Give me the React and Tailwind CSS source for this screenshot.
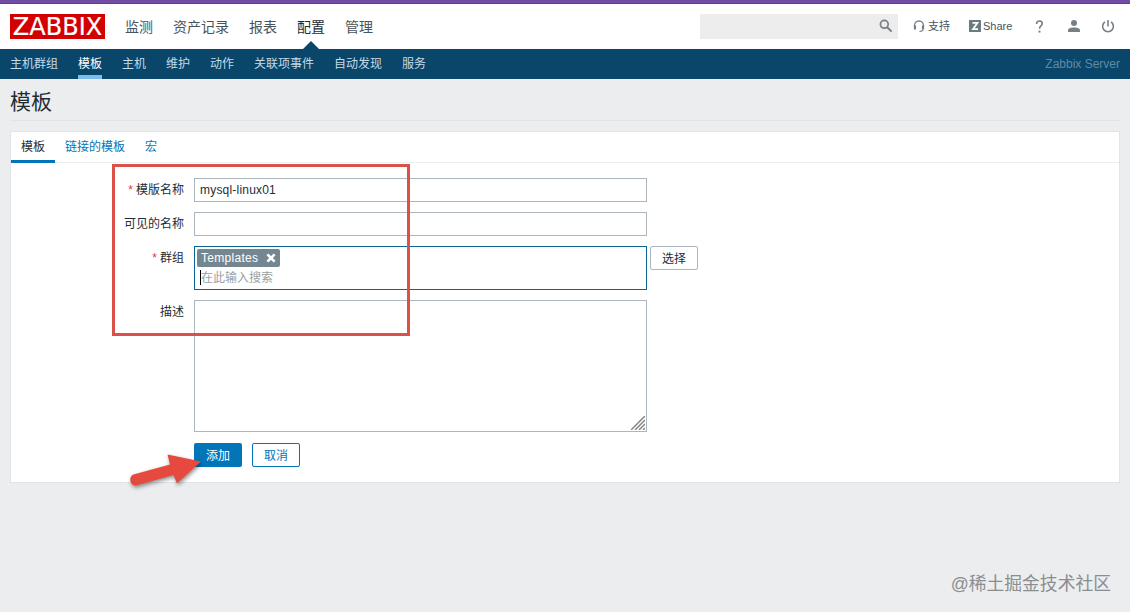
import { useState } from 'react';

const mainMenu = ['监测', '资产记录', '报表', '配置', '管理'];
const subMenu = ['主机群组', '模板', '主机', '维护', '动作', '关联项事件', '自动发现', '服务'];
const tabs = ['模板', '链接的模板', '宏'];

function Header() {
  return (
    <header className="flex h-[45px] bg-white">
      <div className="ml-[10px] mt-[10px] flex h-[25px] w-[95px] items-center justify-center bg-[#d20000] font-['DejaVu_Sans'] text-[24px] leading-[25px] text-white">
        <span className="mt-px [-webkit-text-stroke:0.2px_white]">ZABBIX</span>
      </div>
      <nav className="ml-5 flex gap-5 text-[14px] leading-[46px] text-[#48545c]">
        {mainMenu.map((item) => (
          <a key={item} href="#" className={item === '配置' ? 'relative text-[#1f2c33]' : ''}>
            {item}
            {item === '配置' && (
              <svg className="absolute bottom-0 left-[6px]" width="16" height="8" viewBox="0 0 16 8">
                <path d="M0 8L8 0L16 8Z" fill="#0a466a" />
              </svg>
            )}
          </a>
        ))}
      </nav>
      <div className="ml-auto mr-[15px] flex h-[45px] items-center text-[11px] text-[#48545c]">
        <div className="flex h-[25px] w-[198px] items-center justify-end bg-[#ededed] pr-[5px]">
          <svg className="-mt-px" width="14" height="14" viewBox="0 0 14 14" fill="none" stroke="#768085">
            <circle cx="5.3" cy="5.3" r="3.9" strokeWidth="1.7" />
            <path d="M8.2 8.2L12.6 12.6" strokeWidth="2" />
          </svg>
        </div>
        <a href="#" className="ml-[15px] flex items-center gap-[3px]">
          <svg className="-mt-px" width="12" height="12" viewBox="0 0 12 12" fill="none" stroke="#768085">
            <path d="M1.5 7V5.5a4.5 4.5 0 0 1 9 0V7" strokeWidth="1.3" />
            <path d="M2 5.5v4M10 5.5v4" strokeWidth="2.2" />
            <path d="M10 9.5c0 1.3-1 1.8-3.5 1.8" strokeWidth="1.2" />
          </svg>
          支持
        </a>
        <a href="#" className="ml-[19px] flex items-center gap-[2px]">
          <svg className="-mt-px" width="12" height="12" viewBox="0 0 12 12">
            <rect width="12" height="12" fill="#6c7b82" />
            <path d="M3.5 2.8h5L4 9.2h5" fill="none" stroke="#fff" strokeWidth="1.7" />
          </svg>
          <span className="w-[30px] whitespace-nowrap">Share</span>
        </a>
        <a href="#" className="ml-[22px]">
          <svg className="-mt-px" width="9" height="13" viewBox="0 0 9 13" fill="none" stroke="#768085" strokeWidth="1.6">
            <path d="M1.6 3.9C1.6 2 2.8 1 4.4 1S7.3 2 7.3 3.6C7.3 5.6 4.5 5.8 4.5 8.8" />
            <path d="M4.5 10.6v2" strokeWidth="1.9" />
          </svg>
        </a>
        <a href="#" className="ml-[24px]">
          <svg className="-mt-px" width="12" height="12" viewBox="0 0 12 12" fill="#768085">
            <circle cx="6" cy="3" r="3" />
            <path d="M0 12V10.2C0 8.4 3 7.6 6 7.6s6 .8 6 2.6V12Z" />
          </svg>
        </a>
        <a href="#" className="ml-[21px]">
          <svg className="-mt-px" width="14" height="13" viewBox="0 0 14 13" fill="none" stroke="#768085" strokeWidth="1.6">
            <path d="M7 0v6.5" />
            <path d="M4 1.8a5.4 5.4 0 1 0 6 0" />
          </svg>
        </a>
      </div>
    </header>
  );
}

function SubNav() {
  return (
    <nav className="flex h-[30px] gap-5 bg-[#0a466a] px-[10px] text-[12px] leading-[31px] text-[#c3dbe9]">
      {subMenu.map((item) => (
        <a
          key={item}
          href="#"
          className={item === '模板' ? 'h-[30px] border-b-4 border-[#7cbdea] text-white' : ''}
        >
          {item}
        </a>
      ))}
      <span className="ml-auto text-[#5f8ba5]">Zabbix Server</span>
    </nav>
  );
}

function Label({ required, children }) {
  return (
    <label className="w-[174px] shrink-0 pr-px text-right leading-[25px]">
      {required && <span className="mr-[3px] text-[#e33734]">*</span>}
      {children}
    </label>
  );
}

function TemplateForm() {
  const [name, setName] = useState('mysql-linux01');
  const [visibleName, setVisibleName] = useState('');

  return (
    <form className="flex flex-col gap-[10px] pt-[15px]">
      <div className="flex h-6 gap-[9px]">
        <Label required>模版名称</Label>
        <input
          value={name}
          onChange={(e) => setName(e.target.value)}
          className="h-6 w-[453px] border border-[#acb6bc] bg-white px-[5px] tracking-[0.2px] outline-none"
        />
      </div>
      <div className="flex h-6 gap-[9px]">
        <Label>可见的名称</Label>
        <input
          value={visibleName}
          onChange={(e) => setVisibleName(e.target.value)}
          className="h-6 w-[453px] border border-[#acb6bc] bg-white px-[5px] outline-none"
        />
      </div>
      <div className="flex gap-[9px]">
        <Label required>群组</Label>
        <div className="flex items-start gap-[3px]">
          <div className="h-11 w-[453px] border border-[#0a6494] bg-white px-[2px] pt-[2px]">
            <div className="flex h-[18px] w-[83px] items-center justify-between rounded-[2px] bg-[#748791] pl-[4px] pr-[4px] text-white">
              <span className="tracking-[0.3px]">Templates</span>
              <svg width="10" height="10" viewBox="0 0 10 10" stroke="#fff" strokeWidth="2.6">
                <path d="M1.4 1.4L8.6 8.6M8.6 1.4L1.4 8.6" />
              </svg>
            </div>
            <div className="ml-[3px] mt-[3px] h-[15px] border-l border-black leading-[17px] text-[#9a9fa2]">
              在此输入搜索
            </div>
          </div>
          <button type="button" className="h-6 w-12 rounded-[2px] border border-[#acb6bc] pt-px leading-[22px]">
            选择
          </button>
        </div>
      </div>
      <div className="flex gap-[9px]">
        <Label>描述</Label>
        <div className="relative h-[132px] w-[453px]">
          <textarea className="block h-full w-full resize-none border border-[#acb6bc] bg-white outline-none" />
          <svg
            className="absolute bottom-[2px] right-[2px]"
            width="14"
            height="14"
            viewBox="0 0 14 14"
            stroke="#858585"
            strokeWidth="1.5"
          >
            <path d="M0 14L14 0M4 14L14 4M8 14L14 8M12 14L14 12" />
          </svg>
        </div>
      </div>
      <div className="ml-[183px] mt-px flex gap-[10px]">
        <button type="button" className="h-6 w-12 rounded-[2px] bg-[#0275b8] pt-px leading-[24px] text-white">
          添加
        </button>
        <button
          type="button"
          className="h-6 w-12 rounded-[2px] border border-[#0275b8] pt-px leading-[22px] text-[#0275b8]"
        >
          取消
        </button>
      </div>
    </form>
  );
}

export default function App() {
  return (
    <div className="relative h-[612px] w-[1130px] overflow-hidden bg-[#ebedef] font-['Liberation_Sans','Noto_Sans_CJK_SC',sans-serif] text-[12px] text-[#1f2c33]">
      <div className="h-1 border-b border-[#5d3f92] bg-[#714da5]" />
      <Header />
      <SubNav />
      <main className="px-[10px]">
        <h1 className="h-[42px] border-b border-[#dfe4e7] text-[21px] leading-[46px]">模板</h1>
        <section className="mt-[10px] h-[352px] border border-[#dfe4e7] bg-white">
          <div className="flex h-[31px] border-b border-[#ebeef0] leading-[31px]">
            {tabs.map((tab, i) => (
              <a
                key={tab}
                href="#"
                className={i === 0 ? 'h-[31px] border-b-3 border-[#0275b8] px-[10px]' : 'px-[10px] text-[#0275b8]'}
              >
                {tab}
              </a>
            ))}
          </div>
          <TemplateForm />
        </section>
      </main>

      {/* highlight frame and pointer over the form */}
      <div className="pointer-events-none absolute left-[112px] top-[164px] h-[172px] w-[298px] border-3 border-[#db5048]" />
      <svg
        className="pointer-events-none absolute left-[124px] top-[448px] drop-shadow-[1px_2px_2px_rgba(0,0,0,0.45)]"
        width="80"
        height="46"
        viewBox="0 0 80 46"
      >
        <path
          d="M9.5 26.5L46 16.5L43.5 6.5L77 13.5L53 35.5L49.5 27L12 37.5C6 38.5 4 28.5 9.5 26.5Z"
          fill="#e64a3e"
        />
      </svg>
      <div className="absolute bottom-[14px] right-[19px] whitespace-nowrap text-[17.8px] leading-[28px] text-[#8b8d90]">
        @稀土掘金技术社区
      </div>
    </div>
  );
}
